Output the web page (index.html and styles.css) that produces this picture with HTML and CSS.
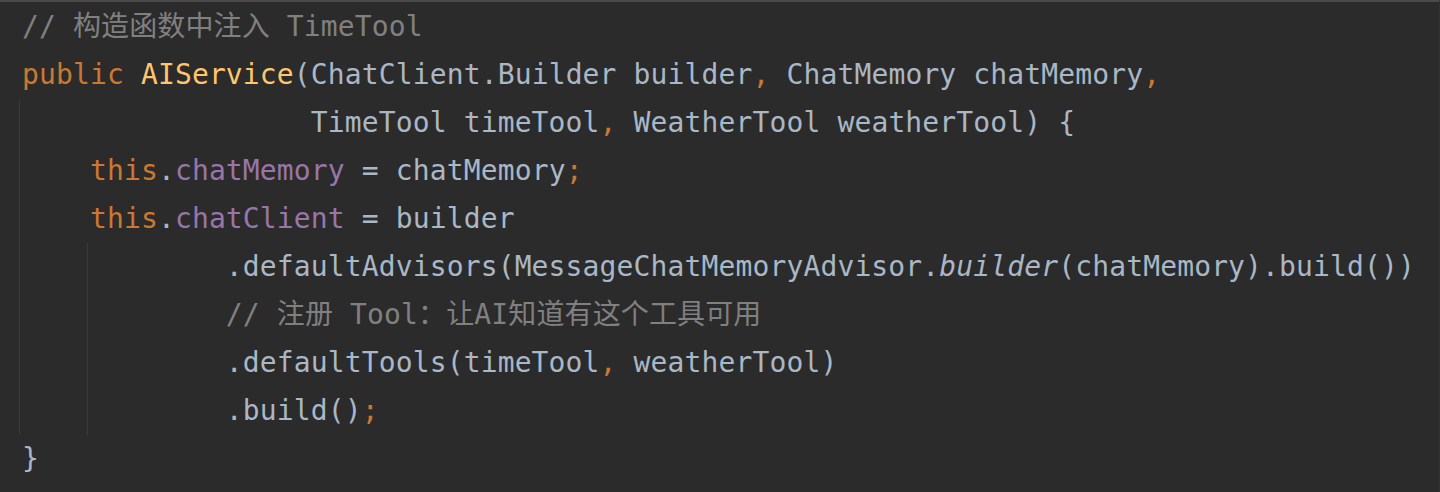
FILE: index.html
```html
<!DOCTYPE html>
<html lang="zh">
<head>
<meta charset="utf-8">
<link rel="stylesheet" href="styles.css">
</head>
<body>
<div class="editor">
<div class="line"><span class="cm">// 构造函数中注入 TimeTool</span></div>
<div class="line"><span class="kw">public</span> <span class="fn">AIService</span>(ChatClient.Builder builder<span class="kw">,</span> ChatMemory chatMemory<span class="kw">,</span></div>
<div class="guide g1">
<div class="line">                 TimeTool timeTool<span class="kw">,</span> WeatherTool weatherTool) {</div>
<div class="line">    <span class="kw">this</span>.<span class="fd">chatMemory</span> = chatMemory<span class="kw">;</span></div>
<div class="line">    <span class="kw">this</span>.<span class="fd">chatClient</span> = builder</div>
<div class="guide g2">
<div class="line">            .defaultAdvisors(MessageChatMemoryAdvisor.<span class="it">builder</span>(chatMemory).build())</div>
<div class="line">            <span class="cm">// 注册 Tool：让AI知道有这个工具可用</span></div>
<div class="line">            .defaultTools(timeTool<span class="kw">,</span> weatherTool)</div>
<div class="line">            .build()<span class="kw">;</span></div>
</div>
</div>
<div class="line">}</div>
</div>
</body>
</html>
```
FILE: styles.css
```css
html, body {
  margin: 0;
  padding: 0;
  background: #2b2b2b;
}
.editor {
  width: 1440px;
  height: 492px;
  box-sizing: border-box;
  border-top: 2px solid #4a4a4a;
  border-right: 1px solid #323232;
  padding-top: 1px;
  background: #2b2b2b;
  color: #a9b7c6;
  font-family: "DejaVu Sans Mono", "Noto Sans CJK SC", monospace;
  font-size: 28px;
  letter-spacing: 0.13px;
  overflow: hidden;
}
.line {
  height: 48px;
  line-height: 48px;
  padding-left: 22px;
  white-space: pre;
}
.guide {
  background-repeat: no-repeat;
  background-image: linear-gradient(#3a3a3a, #3a3a3a);
  background-size: 1px 100%;
}
.g1 { background-position: 19px 0; }
.g2 { background-position: 87px 0; }
.cm { color: #808080; }
.kw { color: #cc7832; }
.fn { color: #ffc66d; }
.fd { color: #9876aa; }
.it { font-style: italic; }
```
